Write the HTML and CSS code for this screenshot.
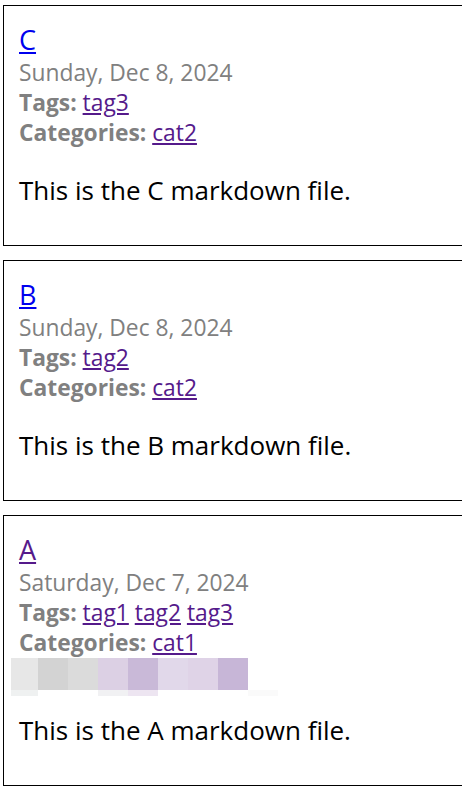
FILE: index.html
```html
<!DOCTYPE html>
<html lang="en">
<head>
<meta charset="utf-8">
<title>Posts</title>
<link rel="stylesheet" href="styles.css">
</head>
<body>
<main class="list">
  <article class="card">
    <a class="title" href="#c">C</a>
    <div class="date">Sunday, Dec 8, 2024</div>
    <div class="meta"><b>Tags:</b> <a class="visited" href="#tag3">tag3</a></div>
    <div class="meta"><b>Categories:</b> <a class="visited" href="#cat2">cat2</a></div>
    <p class="body">This is the C markdown file.</p>
  </article>
  <article class="card">
    <a class="title" href="#b">B</a>
    <div class="date">Sunday, Dec 8, 2024</div>
    <div class="meta"><b>Tags:</b> <a class="visited" href="#tag2">tag2</a></div>
    <div class="meta"><b>Categories:</b> <a class="visited" href="#cat2">cat2</a></div>
    <p class="body">This is the B markdown file.</p>
  </article>
  <article class="card">
    <a class="title visited" href="#a">A</a>
    <div class="date">Saturday, Dec 7, 2024</div>
    <div class="meta"><b>Tags:</b> <a class="visited" href="#tag1">tag1</a> <a class="visited" href="#tag2">tag2</a> <a class="visited" href="#tag3">tag3</a></div>
    <div class="meta"><b>Categories:</b> <a class="visited" href="#cat1">cat1</a></div>
    <div class="mosaic" aria-hidden="true">
      <span class="m m1"></span><span class="m m2"></span><span class="m m3"></span><span class="m m4"></span><span class="m m5"></span><span class="m m6"></span><span class="m m7"></span><span class="m m8"></span><span class="m m9"></span>
      <span class="s s1"></span><span class="s s2"></span><span class="s s3"></span><span class="s s4"></span><span class="s s5"></span><span class="s s6"></span><span class="s s7"></span><span class="s s8"></span><span class="s s9"></span>
    </div>
    <p class="body">This is the A markdown file.</p>
  </article>
</main>
</body>
</html>
```

FILE: styles.css
```css
html, body {
  margin: 0;
  padding: 0;
  background: #fff;
}
body {
  font-family: "Open Sans", "Noto Sans", sans-serif;
  font-size: 22.8px;
  color: #000;
  overflow: hidden;
}
.list {
  display: flex;
  flex-direction: column;
  gap: 14px;
  padding: 5px 0 0 3px;
}
.card {
  width: 428px;
  border: 1px solid #000;
  padding: 15px;
  display: flex;
  flex-direction: column;
  align-items: flex-start;
}
.title {
  font-size: 27px;
  line-height: 37px;
  color: #0000ee;
}
.title.visited, .visited {
  color: #551a8b;
}
.date, .meta {
  line-height: 30px;
  color: #808080;
  white-space: nowrap;
}
.meta b {
  font-weight: 700;
}
.body {
  margin: 24px 0 22px;
  font-size: 26px;
  line-height: 36px;
  white-space: nowrap;
}
.mosaic {
  display: grid;
  grid-template-columns: 27px repeat(8, 30px);
  grid-template-rows: 32px 6px;
  margin: 0 0 -8px -8px;
}
.m1 { background: #e7e7e7; }
.m2 { background: #d3d3d3; }
.m3 { background: #dbdbdb; }
.m4 { background: #dcd0e4; }
.m5 { background: #c9b9d8; }
.m6 { background: #e1d8ea; }
.m7 { background: #dfd3e7; }
.m8 { background: #c7b6d7; }
.m9 { background: #fff; }
.s1 { background: #eff1f1; }
.s2, .s3, .s6, .s7, .s8 { background: #fff; }
.s4 { background: #f1f1f3; }
.s5 { background: #ede5f1; }
.s9 { background: #fafafa; }
```
